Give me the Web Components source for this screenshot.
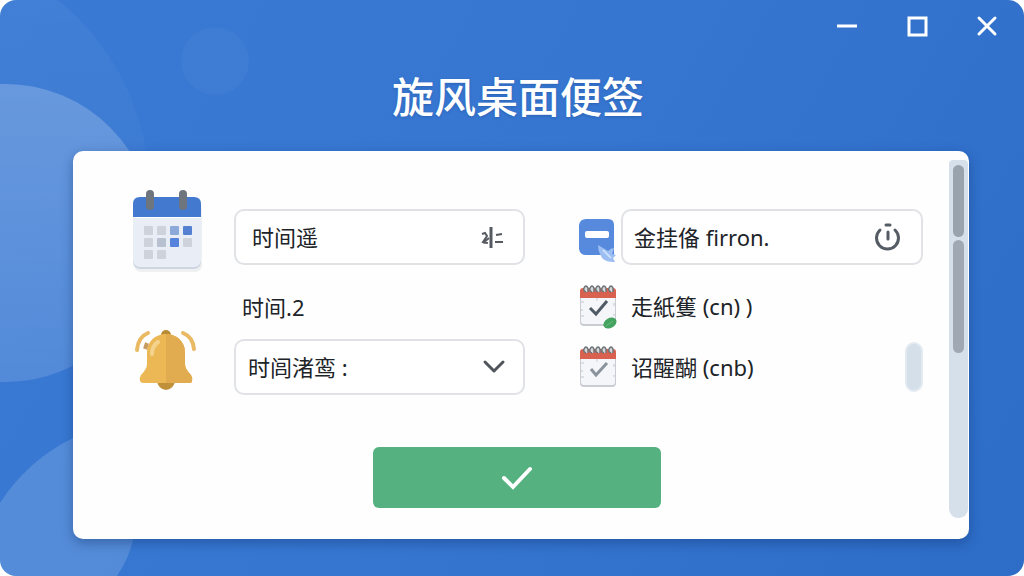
<!DOCTYPE html>
<html lang="zh-CN">
<head>
<meta charset="utf-8">
<meta name="viewport" content="width=device-width, initial-scale=1">
<title>旋风桌面便签</title>
<style>
    body {
        margin: 0;
        background: white;
        color: #202327;
        font-family: "Noto Sans", "Noto Sans CJK SC", sans-serif;
        font-size: 22px;
        line-height: 32px;
    }

    .reminders {
        display: grid;
        grid-template-columns: minmax(0, 394fr) minmax(0, 344fr);
        column-gap: 54px;
    }

    .times {
        display: grid;
        grid-template-columns: 72px minmax(0, 1fr);
        column-gap: 31px;
    }

    .icons {
        display: flex;
        flex-direction: column;
        align-items: center;
        gap: 56px;
    }

    .fields {
        padding-top: 19px;
    }
</style>
</head>
<body>
<note-window heading="旋风桌面便签">
    <note-panel>
        <div class="reminders">
            <div class="times">
                <div class="icons">
                    <note-icon name="calendar"></note-icon>
                    <note-icon name="bell"></note-icon>
                </div>
                <div class="fields">
                    <note-input value="时间遥" label="时间"><note-icon slot="icon" name="split"></note-icon></note-input>
                    <note-select label="时间.2" value="时闾渚鸾 :"></note-select>
                </div>
            </div>
            <div class="fields">
                <note-row compact>
                    <note-icon slot="icon" name="note"></note-icon>
                    <note-input compact value="金挂俻 firron." label="便签"><note-icon slot="icon" name="power"></note-icon></note-input>
                </note-row>
                <note-row tall>
                    <note-icon slot="icon" name="task-done"></note-icon>
                    走紙篗 (cn) )
                </note-row>
                <note-row handle>
                    <note-icon slot="icon" name="task"></note-icon>
                    诏醒醐 (cnb)
                </note-row>
            </div>
        </div>
        <note-confirm slot="action"></note-confirm>
    </note-panel>
</note-window>

<script>
const pad = (spirals) => `
    <rect x="1" y="7" width="36" height="36" rx="4" fill="#c9ccd2"/>
    <rect x="2" y="7" width="34" height="34" rx="3" fill="#f5f6f9"/>
    <path d="M1 15V8q0-3 3-3h30q3 0 3 3v7z" fill="#d9614f"/>
    <path d="M2 19h3M2 27h2M2 33h3M35 20v3M34 32h2" stroke="#c3c8d0"/>
    ${spirals.map(x => `<path d="M${x} 9q-3-1-2-4 2-4 4 0v4" fill="#d5d8da" stroke="#6d7377" stroke-width="1.5"/>`).join('')}
    <path d="M18 15v3" stroke="#cdd0d6"/>`;

const icons = {
    calendar: [72, 82, `
        <rect x="3" y="12" width="68" height="70" rx="7" fill="#d9dce2" opacity=".4"/>
        <rect x="2" y="8" width="68" height="71" rx="7" fill="#cfd6e2"/>
        <rect x="2" y="8" width="68" height="69" rx="7" fill="#e9edf5"/>
        <path d="M2 27V14q0-7 7-7h54q7 0 7 7v13z" fill="#4379ce"/>
        <path d="M2 27.5h68" stroke="#fff"/>
        <path d="M19 4v12M52 4v12" stroke="#6f757d" stroke-width="8" stroke-linecap="round"/>
        <g fill="#cdd2db">
            <rect x="13" y="36" width="9" height="9" rx="1"/><rect x="26" y="36" width="9" height="9" rx="1"/>
            <rect x="13" y="48" width="9" height="9" rx="1"/><rect x="26" y="48" width="9" height="9" rx="1" fill="#b8c1d0"/>
            <rect x="52" y="48" width="9" height="9" rx="1"/>
            <rect x="13" y="60" width="9" height="9" rx="1"/><rect x="26" y="60" width="9" height="9" rx="1"/>
        </g>
        <rect x="39" y="36" width="9" height="9" rx="1" fill="#8da9da"/>
        <rect x="52" y="36" width="9" height="9" rx="1" fill="#557fd0"/>
        <rect x="39" y="48" width="9" height="9" rx="1" fill="#5583dc"/>`],
    bell: [66, 64, `
        <circle cx="32" cy="7" r="5" fill="#b98b36"/>
        <path d="M23 52a9 10 0 0 0 18 0z" fill="#c0903a"/>
        <path d="M32 6C21 6 13 14 13 24v12q0 5-6 11-2 3-1 6 1 2 3 2h46q3 0 3-2 1-3-1-6-6-6-6-11V24C51 14 43 6 32 6z" fill="#ecb856"/>
        <path d="M32 6v49h23q3 0 3-2 1-3-1-6-6-6-6-11V24C51 14 43 6 32 6z" fill="#e0ac4f"/>
        <path d="M18 26q0-8 6-12" fill="none" stroke="#f4d38e" stroke-width="4" stroke-linecap="round"/>
        <path d="M3 22Q4 9 14 5M60 21Q59 9 49 5" fill="none" stroke="#e9b964" stroke-width="4" stroke-linecap="round"/>
        <path d="M13 15l-2 6" stroke="#c79a62" stroke-width="4"/>`],
    note: [38, 38, `
        <g transform="translate(0 1)">
            <path d="M7 0h22q6 0 6 6v30H7q-6 0-7-6V6q1-6 7-6z" fill="#578add"/>
            <rect x="6" y="12" width="24" height="7" rx="2" fill="#fff"/>
        </g>
        <path d="M19 27l10 6q3-3 6-3l-2 6 4 1-3 3 2 4q-12 1-15-8-2-4-2-9z" fill="#9cbef2"/>
        <path d="M24 32l8 8" stroke="#c9defb" stroke-width="2"/>`],
    'task-done': [38, 46, `${pad([7, 13, 19, 25, 32])}
        <path d="M11 25l6 6 11-13" fill="none" stroke="#505a66" stroke-width="3"/>
        <ellipse cx="31" cy="40" rx="7" ry="5" fill="#43a35f" transform="rotate(-30 31 40)"/>
        <path d="M27 43l7-5" stroke="#67bd80"/>`],
    task: [38, 46, `${pad([7, 13, 19, 25, 32])}
        <path d="M12 25l5 6 11-12" fill="none" stroke="#8a929b" stroke-width="3"/>`],
    split: [24, 24, `
        <g fill="none" stroke="#555b61" stroke-width="2">
            <path d="M12 2v21" stroke-width="3"/>
            <path d="M3 9l3-1 2 3-4 6 5 1M4 18l6-5M17 10l6-1M16 17h8"/>
        </g>`],
    power: [26, 26, `
        <g fill="none" stroke="#555c64" stroke-width="3" stroke-linecap="round">
            <path d="M5 6a11 11 0 1 0 15 0"/>
            <path d="M13 8v7"/>
            <path d="M11 1h4"/>
        </g>`],
    chevron: [24, 14, `<path d="M3 2l9 9 9-9" fill="none" stroke="#50555b" stroke-width="3" stroke-linecap="round" stroke-linejoin="round"/>`],
    check: [32, 24, `<path d="M3 12l9 9L29 3" fill="none" stroke="#fff" stroke-width="4" stroke-linecap="round"/>`],
    minimize: [20, 20, `<path d="M0 10h20" stroke="#fff" stroke-width="3"/>`],
    maximize: [20, 20, `<rect x="2" y="2" width="17" height="17" fill="none" stroke="#fff" stroke-width="3"/>`],
    close: [20, 20, `<path d="M2 2l16 16M18 2L2 18" stroke="#fff" stroke-width="3" stroke-linecap="round"/>`],
};

class NoteIcon extends HTMLElement {
    connectedCallback() {
        const [width, height, shape] = icons[this.getAttribute('name')];
        this.attachShadow({mode: 'open'}).innerHTML = `<style>
    :host {
        display: block;
        flex: none;
    }

    svg {
        display: block;
        overflow: visible;
    }
</style>
<svg width="${width}" height="${height}" viewBox="0 0 ${width} ${height}" aria-hidden="true">${shape}</svg>`;
    }
}

class NoteWindow extends HTMLElement {
    connectedCallback() {
        this.attachShadow({mode: 'open'}).innerHTML = `<style>
    :host {
        display: flex;
        flex-direction: column;
        position: relative;
        isolation: isolate;
        overflow: hidden;
        min-height: 100vh;
        border-radius: 16px;
        background: linear-gradient(120deg, #3a7ad4, #3676d1 50%, #2d6cc7);
    }

    .backdrop {
        position: absolute;
        top: 0;
        left: 0;
        z-index: -1;
    }

    nav {
        display: flex;
        justify-content: flex-end;
        gap: 50px;
        padding: 16px 27px;
    }

    button {
        padding: 0;
        border: none;
        background: none;
        cursor: pointer;
    }

    h1 {
        margin: 0 55px 24px 67px;
        padding-top: 15px;
        color: white;
        font-size: 42px;
        font-weight: 500;
        line-height: 60px;
        text-align: center;
        text-shadow: 0 1px 3px rgba(20, 50, 110, 0.3);
    }
</style>
<svg class="backdrop" width="260" height="576" viewBox="0 0 260 576" aria-hidden="true">
    <defs>
        <linearGradient id="fade" x1="0" y1="0" x2="0" y2="1">
            <stop offset="0" stop-color="#fff" stop-opacity=".21"/>
            <stop offset="1" stop-color="#fff" stop-opacity=".13"/>
        </linearGradient>
        <linearGradient id="halo" x1="0" y1="0" x2="0" y2="1">
            <stop offset="0" stop-color="#fff" stop-opacity=".04"/>
            <stop offset="1" stop-color="#fff" stop-opacity="0"/>
        </linearGradient>
    </defs>
    <path d="M0 0H58Q130 60 146 151V400H0z" fill="url(#halo)"/>
    <circle cx="5" cy="233" r="149" fill="url(#fade)"/>
    <circle cx="215" cy="61" r="34" fill="#fff" opacity=".03"/>
    <path d="M0 503Q28 460 73 438h60v102q-4 18-16 36H0z" fill="#fff" opacity=".15"/>
</svg>
<nav>
    <button aria-label="最小化"><note-icon name="minimize"></note-icon></button>
    <button aria-label="最大化"><note-icon name="maximize"></note-icon></button>
    <button aria-label="关闭"><note-icon name="close"></note-icon></button>
</nav>
<h1>${this.getAttribute('heading')}</h1>
<slot></slot>`;
    }
}

class NotePanel extends HTMLElement {
    connectedCallback() {
        this.attachShadow({mode: 'open'}).innerHTML = `<style>
    :host {
        display: flex;
        flex: 1;
        margin: 0 55px 37px 73px;
        border-radius: 10px;
        background: #fefefe;
        box-shadow: 0 4px 12px rgba(20, 55, 115, 0.45);
    }

    .content {
        flex: 1;
        min-width: 0;
        padding: 39px 26px 31px 58px;
    }

    .action {
        display: flex;
        justify-content: center;
        padding: 52px 20px 0 0;
    }

    .track {
        display: flex;
        flex: none;
        flex-direction: column;
        gap: 3px;
        box-sizing: border-box;
        width: 19px;
        margin: 9px 1px 21px 0;
        padding: 5px 4px;
        border-radius: 4px 4px 9px 9px;
        background: #d6e0eb;
    }

    .thumb {
        flex: 0 0 72px;
        border-radius: 6px;
        background: #98a3ae;
    }

    .thumb + .thumb {
        flex-basis: 113px;
        background: #a0a9b3;
    }
</style>
<div class="content">
    <slot></slot>
    <div class="action"><slot name="action"></slot></div>
</div>
<div class="track">
    <div class="thumb"></div>
    <div class="thumb"></div>
</div>`;
    }
}

class NoteInput extends HTMLElement {
    connectedCallback() {
        this.attachShadow({mode: 'open'}).innerHTML = `<style>
    :host {
        display: flex;
        align-items: center;
        box-sizing: border-box;
        height: 56px;
        padding: 0 20px 0 16px;
        border: 2px solid #e0e2e5;
        border-radius: 10px;
        background: white;
    }

    :host([compact]) {
        padding-left: 11px;
    }

    input {
        flex: 1;
        min-width: 0;
        padding: 0;
        border: none;
        outline: none;
        background: none;
        color: inherit;
        font: inherit;
    }
</style>
<input type="text" aria-label="${this.getAttribute('label')}" value="${this.getAttribute('value')}">
<slot name="icon"></slot>`;
    }
}

class NoteSelect extends HTMLElement {
    connectedCallback() {
        this.attachShadow({mode: 'open'}).innerHTML = `<style>
    :host {
        display: block;
    }

    label {
        display: block;
        padding: 26px 8px 16px;
    }

    .box {
        display: grid;
        grid-template-columns: 1fr auto;
        align-items: center;
    }

    select {
        grid-area: 1 / 1 / 2 / 3;
        height: 56px;
        padding: 0 48px 0 12px;
        border: 2px solid #e0e2e5;
        border-radius: 10px;
        background: white;
        color: inherit;
        font: inherit;
        appearance: none;
    }

    note-icon {
        grid-area: 1 / 2;
        margin-right: 19px;
        pointer-events: none;
    }
</style>
<label for="time">${this.getAttribute('label')}</label>
<div class="box">
    <select id="time"><option>${this.getAttribute('value')}</option></select>
    <note-icon name="chevron"></note-icon>
</div>`;
    }
}

class NoteRow extends HTMLElement {
    connectedCallback() {
        this.attachShadow({mode: 'open'}).innerHTML = `<style>
    :host {
        display: flex;
        align-items: center;
        gap: 14px;
        box-sizing: border-box;
        height: 56px;
    }

    :host([compact]) {
        gap: 4px;
    }

    :host([tall]) {
        height: 74px;
        padding-top: 8px;
    }

    .body {
        flex: 1;
        min-width: 0;
    }

    .handle {
        display: none;
        box-sizing: border-box;
        width: 18px;
        height: 50px;
        border: 2px solid #e3eaf2;
        border-radius: 9px;
        background: #d5dfe9;
    }

    :host([handle]) .handle {
        display: block;
    }
</style>
<slot name="icon"></slot>
<div class="body"><slot></slot></div>
<div class="handle"></div>`;
    }
}

class NoteConfirm extends HTMLElement {
    connectedCallback() {
        this.attachShadow({mode: 'open'}).innerHTML = `<style>
    :host {
        display: block;
    }

    button {
        display: flex;
        align-items: center;
        justify-content: center;
        width: 288px;
        height: 61px;
        border: none;
        border-radius: 6px;
        background: #55b17f;
        cursor: pointer;
    }
</style>
<button aria-label="确定"><note-icon name="check"></note-icon></button>`;
    }
}

customElements.define('note-icon', NoteIcon);
customElements.define('note-window', NoteWindow);
customElements.define('note-panel', NotePanel);
customElements.define('note-input', NoteInput);
customElements.define('note-select', NoteSelect);
customElements.define('note-row', NoteRow);
customElements.define('note-confirm', NoteConfirm);
</script>
</body>
</html>
